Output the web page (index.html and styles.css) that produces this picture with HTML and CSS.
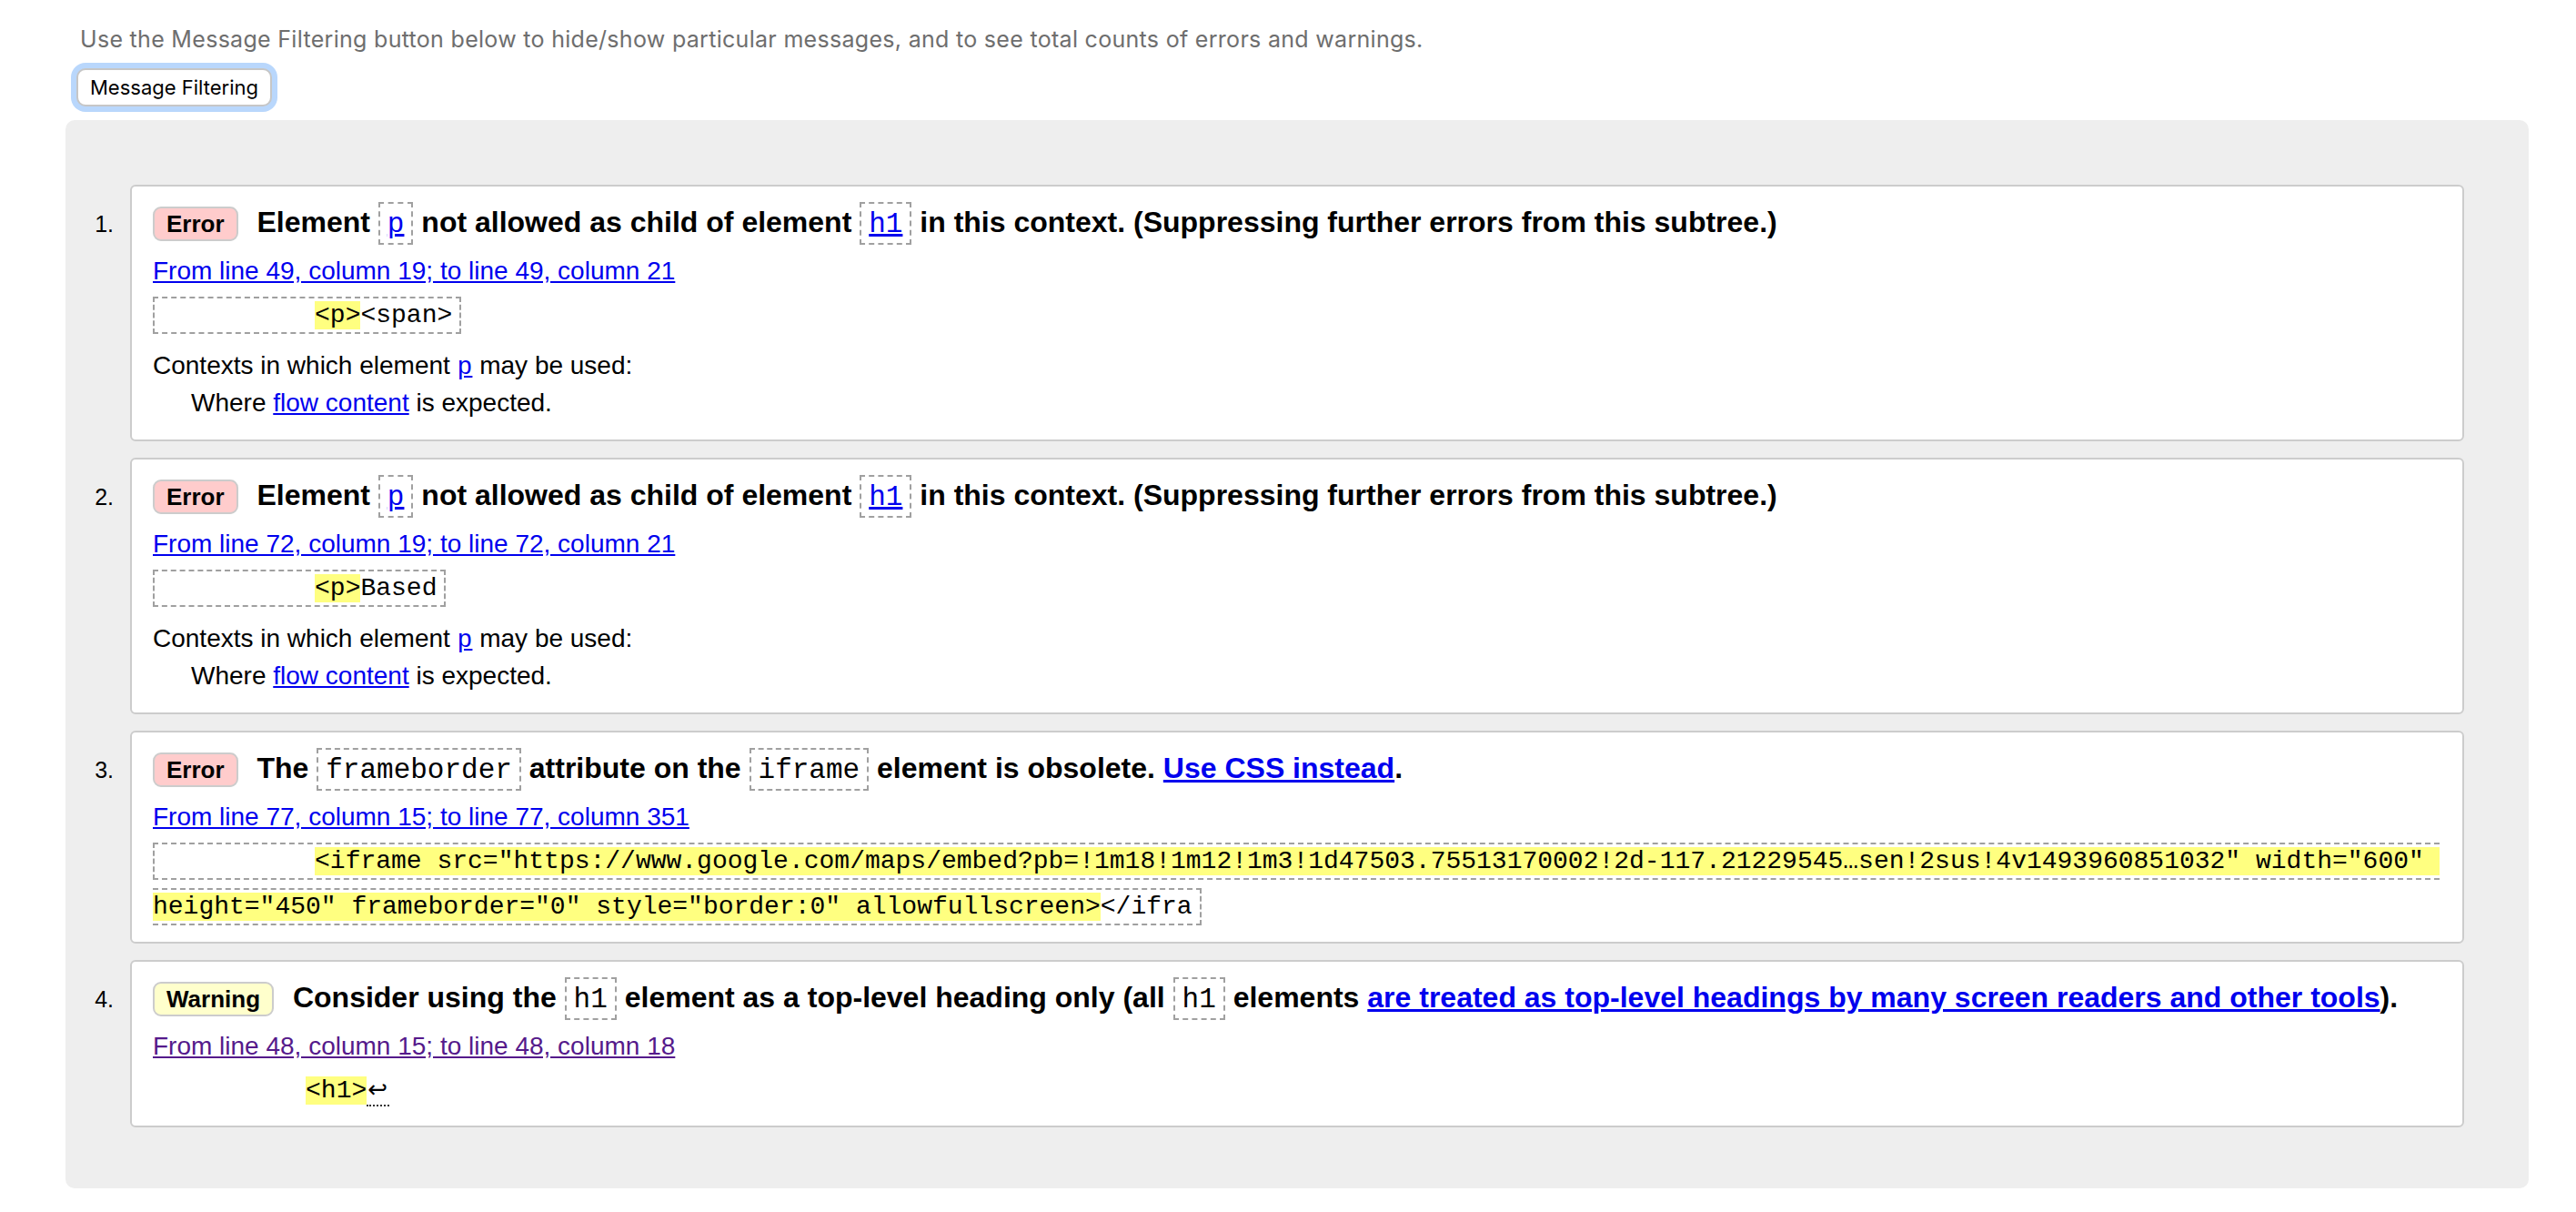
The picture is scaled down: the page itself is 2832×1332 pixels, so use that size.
FILE: index.html
```html
<!DOCTYPE html>
<html lang="en">
<head>
<meta charset="utf-8">
<title>Validation results</title>
<link rel="stylesheet" href="styles.css">
</head>
<body>
<div class="page">
  <p class="intro">Use the Message Filtering button below to hide/show particular messages, and to see total counts of errors and warnings.</p>
  <button class="filter-btn" type="button">Message Filtering</button>
  <ol class="results">
    <li class="result">
      <span class="num">1.</span>
      <div class="card">
        <p class="title"><span class="badge error">Error</span> Element <code class="kw"><a href="#">p</a></code> not allowed as child of element <code class="kw"><a href="#">h1</a></code> in this context. (Suppressing further errors from this subtree.)</p>
        <p class="loc"><a href="#">From line 49, column 19; to line 49, column 21</a></p>
        <p class="extract"><code class="src">          <mark>&lt;p&gt;</mark>&lt;span&gt;</code></p>
        <dl class="contexts">
          <dt>Contexts in which element <a class="mono" href="#">p</a> may be used:</dt>
          <dd>Where <a href="#">flow content</a> is expected.</dd>
        </dl>
      </div>
    </li>
    <li class="result">
      <span class="num">2.</span>
      <div class="card">
        <p class="title"><span class="badge error">Error</span> Element <code class="kw"><a href="#">p</a></code> not allowed as child of element <code class="kw"><a href="#">h1</a></code> in this context. (Suppressing further errors from this subtree.)</p>
        <p class="loc"><a href="#">From line 72, column 19; to line 72, column 21</a></p>
        <p class="extract"><code class="src">          <mark>&lt;p&gt;</mark>Based</code></p>
        <dl class="contexts">
          <dt>Contexts in which element <a class="mono" href="#">p</a> may be used:</dt>
          <dd>Where <a href="#">flow content</a> is expected.</dd>
        </dl>
      </div>
    </li>
    <li class="result">
      <span class="num">3.</span>
      <div class="card">
        <p class="title"><span class="badge error">Error</span> The <code class="kw">frameborder</code> attribute on the <code class="kw">iframe</code> element is obsolete. <a href="#">Use CSS instead</a>.</p>
        <p class="loc"><a href="#">From line 77, column 15; to line 77, column 351</a></p>
        <p class="extract"><code class="src">          <mark>&lt;iframe src="https://www.google.com/maps/embed?pb=!1m18!1m12!1m3!1d47503.75513170002!2d-117.21229545…sen!2sus!4v1493960851032" width="600" height="450" frameborder="0" style="border:0" allowfullscreen&gt;</mark>&lt;/ifra</code></p>
      </div>
    </li>
    <li class="result">
      <span class="num">4.</span>
      <div class="card">
        <p class="title"><span class="badge warning">Warning</span> Consider using the <code class="kw">h1</code> element as a top-level heading only (all <code class="kw">h1</code> elements <a href="#">are treated as top-level headings by many screen readers and other tools</a>).</p>
        <p class="loc"><a class="visited" href="#">From line 48, column 15; to line 48, column 18</a></p>
        <p class="extract"><code class="src plain">          <mark>&lt;h1&gt;</mark><abbr class="eol" title="line break">↩</abbr></code></p>
      </div>
    </li>
  </ol>
</div>
</body>
</html>
```

FILE: styles.css
```css
* {
  box-sizing: border-box;
}

html, body {
  margin: 0;
  background: #fff;
}

body {
  font-family: "Liberation Sans", Arial, sans-serif;
  font-size: 28px;
  color: #000;
}

.page {
  padding: 28px 52px 23px 72px;
}

.intro {
  margin: 0 0 17px 16px;
  font: 25px/30px Inter, "Liberation Sans", sans-serif;
  letter-spacing: 0.3px;
  color: #6e6e6e;
}

.filter-btn {
  display: block;
  margin-left: 12px;
  height: 42px;
  padding: 6px 13px;
  font: 22px/26px Inter, "Liberation Sans", sans-serif;
  color: #000;
  background: #fff;
  border: 2px solid #c6c6c6;
  border-radius: 10px;
  box-shadow: 0 0 0 6px #b9d7fc;
}

.results {
  list-style: none;
  margin: 15px 0 0;
  padding: 71px 71px 67px 0;
  background: #eee;
  border-radius: 10px;
}

.result {
  display: flex;
  align-items: baseline;
}

.result + .result {
  margin-top: 18px;
}

.num {
  flex: none;
  width: 71px;
  padding-right: 18px;
  text-align: right;
  font-size: 25px;
}

.card {
  flex: 1;
  min-width: 0;
  background: #fff;
  border: 2px solid #ccc;
  border-radius: 6px;
  padding: 19px 23px 13px;
}

.card p {
  margin: 0;
}

a {
  color: #0000ee;
}

a.visited {
  color: #551a8b;
}

.title {
  font-size: 32px;
  font-weight: bold;
  line-height: 40px;
}

.badge {
  display: inline-block;
  margin-right: 12px;
  padding: 2px 13px;
  font-size: 26px;
  line-height: 30px;
  font-weight: bold;
  border: 2px solid #ccc;
  border-radius: 9px;
}

.badge.error {
  background: #fcc;
}

.badge.warning {
  background: #ffc;
}

.kw {
  font-family: "Liberation Mono", "Courier New", monospace;
  font-size: 31px;
  font-weight: normal;
  line-height: 1;
  padding: 5px 8px 3px;
  border: 2px dashed #a0a0a0;
}

.card .loc {
  margin-top: 15px;
  line-height: 36px;
}

.card .extract {
  margin-top: 6px;
  font-family: "Liberation Mono", "Courier New", monospace;
  font-size: 28px;
  line-height: 50px;
  white-space: pre-wrap;
}

.src {
  font-family: inherit;
  padding: 3px 8px;
  border: 2px dashed #a0a0a0;
}

.src.plain {
  padding: 0;
  border: 0;
}

mark {
  background: #ffff80;
  color: inherit;
}

.eol {
  font-family: "DejaVu Sans", sans-serif;
  font-size: 26px;
  line-height: 1;
  text-decoration: none;
  padding: 0 2px 2px 1px;
  border-bottom: 2px dotted #333;
}

.contexts {
  margin: 12px 0 0;
  line-height: 36px;
}

.contexts dt {
  margin: 0;
}

.contexts dd {
  margin: 5px 0 9px 42px;
}

.mono {
  font-family: "Liberation Mono", "Courier New", monospace;
  line-height: 1;
}
```
